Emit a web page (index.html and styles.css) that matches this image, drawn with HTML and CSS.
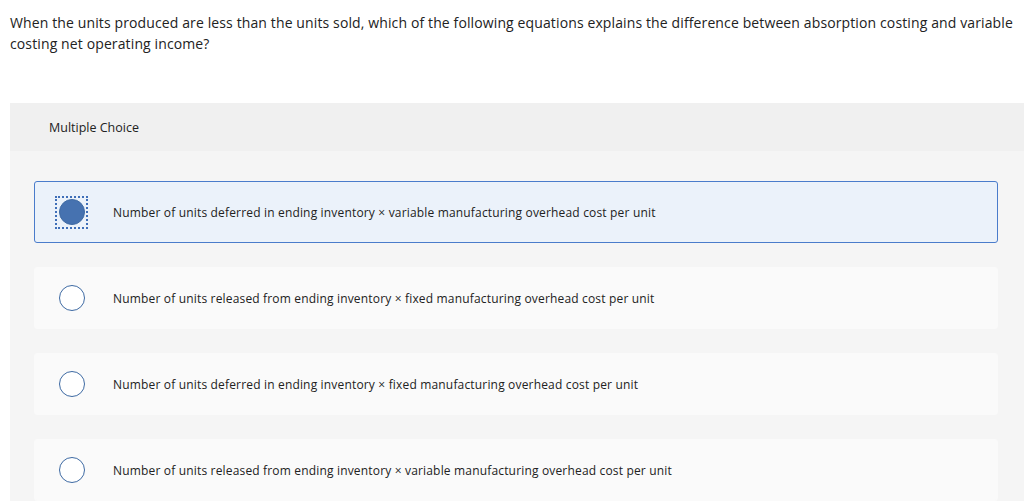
FILE: index.html
```html
<!DOCTYPE html>
<html>
<head>
<meta charset="utf-8">
<link rel="stylesheet" href="styles.css">
</head>
<body>
<p class="question">When the units produced are less than the units sold, which of the following equations explains the difference between absorption costing and variable costing net operating income?</p>
<div class="panel">
  <div class="panel-head">Multiple Choice</div>
  <div class="panel-body">
    <div class="option selected">
      <span class="radio-wrap"><span class="radio"></span></span>
      <span class="label">Number of units deferred in ending inventory × variable manufacturing overhead cost per unit</span>
    </div>
    <div class="option">
      <span class="radio-wrap"><span class="radio"></span></span>
      <span class="label">Number of units released from ending inventory × fixed manufacturing overhead cost per unit</span>
    </div>
    <div class="option">
      <span class="radio-wrap"><span class="radio"></span></span>
      <span class="label">Number of units deferred in ending inventory × fixed manufacturing overhead cost per unit</span>
    </div>
    <div class="option">
      <span class="radio-wrap"><span class="radio"></span></span>
      <span class="label">Number of units released from ending inventory × variable manufacturing overhead cost per unit</span>
    </div>
  </div>
</div>
</body>
</html>
```
FILE: styles.css
```css
html, body {
  margin: 0;
  padding: 0;
  background: #ffffff;
  overflow: hidden;
}
body {
  font-family: "Open Sans", "Liberation Sans", sans-serif;
  color: #222222;
}
.question {
  margin: 0;
  padding: 12px 2px 0 10px;
  font-size: 14px;
  letter-spacing: 0.12px;
  line-height: 21px;
}
.panel {
  margin: 49px 0 0 10px;
  background: #f5f5f5;
}
.panel-head {
  background: #f0f0f0;
  height: 48px;
  display: flex;
  align-items: center;
  padding-left: 39px;
  font-size: 12.5px;
  color: #222;
}
.panel-body {
  padding: 30px 26px 0 24px;
  display: flex;
  flex-direction: column;
  gap: 24px;
}
.option {
  height: 62px;
  box-sizing: border-box;
  background: #fafafa;
  border: 1px solid #fafafa;
  border-radius: 3px;
  display: flex;
  align-items: center;
  padding-left: 20px;
}
.option.selected {
  background: #ebf2fa;
  border-color: #4a7ccb;
}
.radio-wrap {
  width: 33px;
  height: 33px;
  box-sizing: border-box;
  display: flex;
  align-items: center;
  justify-content: center;
  border: 2px dotted transparent;
}
.selected .radio-wrap {
  border-color: #3f6fb8;
}
.radio {
  width: 26px;
  height: 26px;
  box-sizing: border-box;
  border-radius: 50%;
  border: 1.5px solid #3e6aa3;
  background: #ffffff;
}
.selected .radio {
  background: #4672b0;
  border-color: #3e6aa3;
}
.label {
  margin-left: 25px;
  font-size: 12px;
  letter-spacing: 0.17px;
  color: #222;
}
```
